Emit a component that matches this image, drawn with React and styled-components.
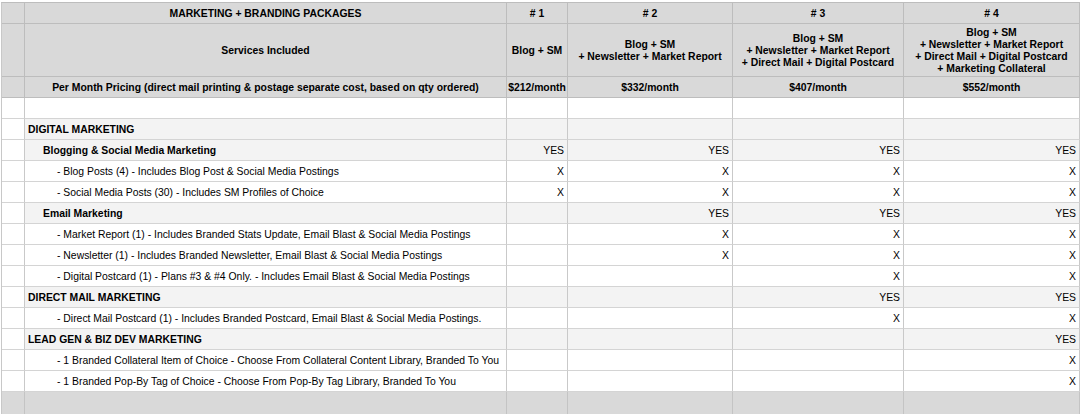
import React from "react";
import styled, { createGlobalStyle } from "styled-components";

const GlobalStyle = createGlobalStyle`
  body {
    margin: 0;
    background: #ffffff;
    font-family: "Liberation Sans", Arial, sans-serif;
    color: #000;
  }
`;

const COLUMNS = "23px 482px 61px 165px 171px 176px";

export const Sheet = styled.div`
  margin: 2px 0 0 1px;
  border-top: 1px solid #bdbdbd;
  border-left: 1px solid #c8c8c8;
  width: 1078px;
`;

export const Row = styled.div`
  display: grid;
  grid-template-columns: ${COLUMNS};
  height: ${props => props.height || 21}px;
  background: ${props =>
    props.tone === "head" ? "#d9d9d9" : props.tone === "group" ? "#f3f3f3" : "#ffffff"};
`;

export const Cell = styled.div`
  box-sizing: border-box;
  display: flex;
  align-items: center;
  justify-content: ${props =>
    props.align === "right" ? "flex-end" : props.align === "center" ? "center" : "flex-start"};
  text-align: ${props => props.align || "left"};
  padding: 1px 3px 0 ${props => 3 + (props.indent || 0)}px;
  border-right: 1px solid ${props => (props.dark ? "#bdbdbd" : "#c9c9c9")};
  border-bottom: 1px solid ${props => (props.dark ? "#bdbdbd" : "#d4d4d4")};
  font-size: 10.4px;
  line-height: 12px;
  font-weight: ${props => (props.bold ? 700 : 400)};
  white-space: nowrap;
  overflow: hidden;
  background: ${props => (props.blank ? "#ffffff" : "transparent")};
`;

export const Footer = styled.div`
  display: grid;
  grid-template-columns: ${COLUMNS};
  height: 30px;
  background: #d9d9d9;
`;

export const FooterCell = styled.div`
  border-right: 1px solid #c4c4c4;
`;

const headerRows = [
  {
    height: 21,
    label: "MARKETING + BRANDING PACKAGES",
    plans: ["# 1", "# 2", "# 3", "# 4"]
  },
  {
    height: 53,
    label: "Services Included",
    plans: [
      ["Blog + SM"],
      ["Blog + SM", "+ Newsletter + Market Report"],
      ["Blog + SM", "+ Newsletter + Market Report", "+ Direct Mail + Digital Postcard"],
      [
        "Blog + SM",
        "+ Newsletter + Market Report",
        "+ Direct Mail + Digital Postcard",
        "+ Marketing Collateral"
      ]
    ]
  },
  {
    height: 21,
    label: "Per Month Pricing (direct mail printing & postage separate cost, based on qty ordered)",
    plans: ["$212/month", "$332/month", "$407/month", "$552/month"]
  }
];

const bodyRows = [
  { level: 0, label: "DIGITAL MARKETING", marks: ["", "", "", ""] },
  { level: 1, label: "Blogging & Social Media Marketing", marks: ["YES", "YES", "YES", "YES"] },
  { level: 2, label: "- Blog Posts (4) - Includes Blog Post & Social Media Postings", marks: ["X", "X", "X", "X"] },
  { level: 2, label: "- Social Media Posts (30) - Includes SM Profiles of Choice", marks: ["X", "X", "X", "X"] },
  { level: 1, label: "Email Marketing", marks: ["", "YES", "YES", "YES"] },
  { level: 2, label: "- Market Report (1) - Includes Branded Stats Update, Email Blast & Social Media Postings", marks: ["", "X", "X", "X"] },
  { level: 2, label: "- Newsletter (1) - Includes Branded Newsletter, Email Blast & Social Media Postings", marks: ["", "X", "X", "X"] },
  { level: 2, label: "- Digital Postcard (1) - Plans #3 & #4 Only. - Includes Email Blast & Social Media Postings", marks: ["", "", "X", "X"] },
  { level: 0, label: "DIRECT MAIL MARKETING", marks: ["", "", "YES", "YES"] },
  { level: 2, label: "- Direct Mail Postcard (1) - Includes Branded Postcard, Email Blast & Social Media Postings.", marks: ["", "", "X", "X"] },
  { level: 0, label: "LEAD GEN & BIZ DEV MARKETING", marks: ["", "", "", "YES"] },
  { level: 2, label: "- 1 Branded Collateral Item of Choice - Choose From Collateral Content Library, Branded To You", marks: ["", "", "", "X"] },
  { level: 2, label: "- 1 Branded Pop-By Tag of Choice - Choose From Pop-By Tag Library, Branded To You", marks: ["", "", "", "X"] }
];

const indents = [0, 15, 29];

const PlanLines = ({ lines }) => (
  <div>
    {lines.map(line => (
      <div key={line}>{line}</div>
    ))}
  </div>
);

const App = () => (
  <>
    <GlobalStyle />
    <Sheet>
      {headerRows.map(row => (
        <Row key={row.label} tone="head" height={row.height}>
          <Cell dark />
          <Cell dark bold align="center">
            {row.label}
          </Cell>
          {row.plans.map((plan, i) => (
            <Cell dark bold align="center" key={i}>
              {Array.isArray(plan) ? <PlanLines lines={plan} /> : plan}
            </Cell>
          ))}
        </Row>
      ))}

      <Row>
        <Cell />
        <Cell />
        <Cell />
        <Cell />
        <Cell />
        <Cell />
      </Row>

      {bodyRows.map(row => (
        <Row key={row.label} tone={row.level < 2 ? "group" : "plain"}>
          <Cell blank />
          <Cell bold={row.level < 2} indent={indents[row.level]}>
            {row.label}
          </Cell>
          {row.marks.map((mark, i) => (
            <Cell align="right" key={i}>
              {mark}
            </Cell>
          ))}
        </Row>
      ))}

      <Footer>
        <FooterCell />
        <FooterCell />
        <FooterCell />
        <FooterCell />
        <FooterCell />
        <FooterCell />
      </Footer>
    </Sheet>
  </>
);

export default App;
